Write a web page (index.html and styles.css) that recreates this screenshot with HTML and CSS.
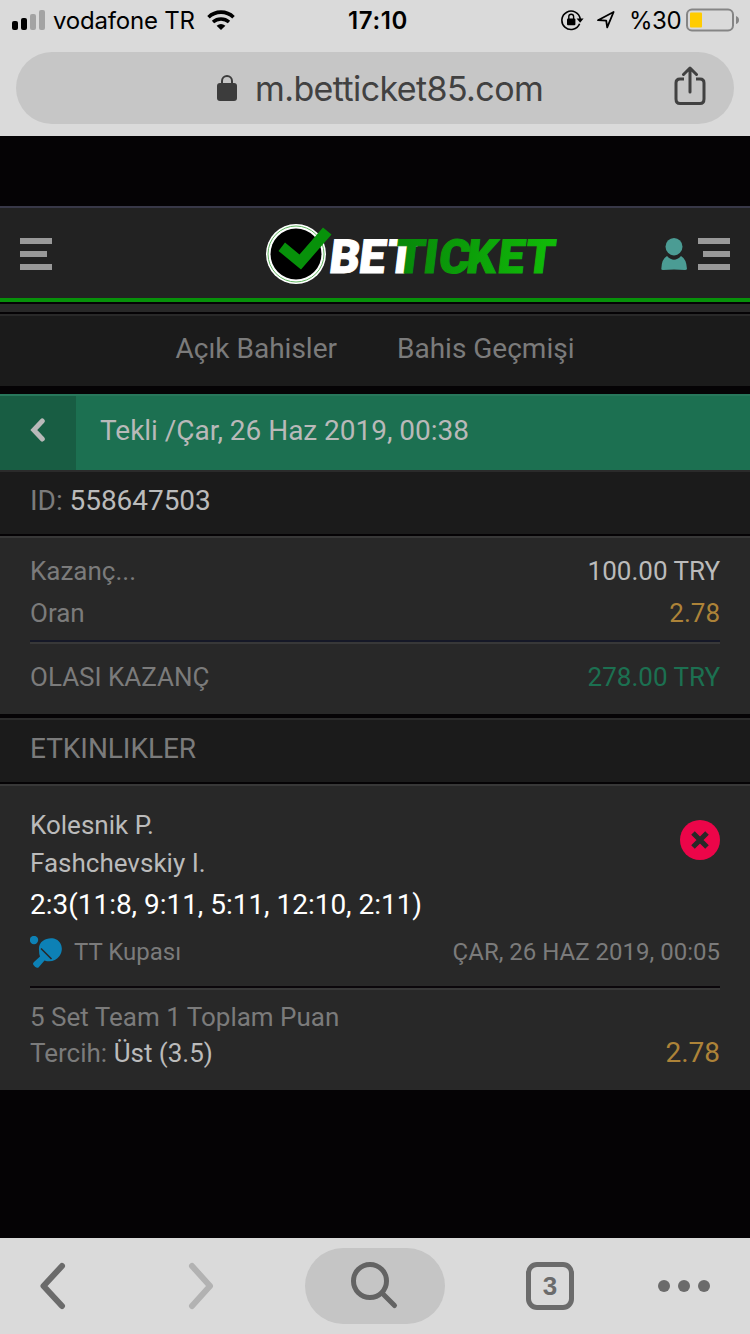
FILE: index.html
```html
<!DOCTYPE html>
<html lang="tr">
<head>
    <meta charset="UTF-8">
    <meta name="viewport" content="width=device-width, initial-scale=1.0">
    <title>Betticket - Bahis Geçmişi</title>
    <link rel="stylesheet" href="styles.css">
</head>
<body>

    <!-- Browser top -->
    <div class="browser-top">
        <div class="status-bar">
            <div class="status-left">
                <svg class="signal" width="34" height="20" viewBox="0 0 34 20">
                    <rect x="0" y="11" width="6" height="9" rx="2"/>
                    <rect x="9" y="8" width="6" height="12" rx="2"/>
                    <rect x="18" y="4" width="6" height="16" rx="2" fill="#a3a3a3"/>
                    <rect x="27" y="0" width="6" height="20" rx="2" fill="#a3a3a3"/>
                </svg>
                <span class="carrier">vodafone TR</span>
                <svg class="wifi" width="28" height="20" viewBox="0 0 28 20">
                    <path d="M1.5 7.2A18 18 0 0 1 26.5 7.2" fill="none" stroke="#000" stroke-width="3.6"/>
                    <path d="M6 12A12 12 0 0 1 22 12" fill="none" stroke="#000" stroke-width="3.4"/>
                    <path d="M14 20L9.6 15.8Q14 12.2 18.4 15.8Z"/>
                </svg>
            </div>
            <span class="clock">17:10</span>
            <div class="status-right">
                <svg class="rotation" width="23" height="22" viewBox="0 0 23 22">
                    <path d="M18.6 14.8A9.2 9.2 0 1 1 19.2 10" fill="none" stroke="#000" stroke-width="1.6"/>
                    <path d="M15.6 9.6H22.6L19.1 13.8Z"/>
                    <rect x="6" y="9.5" width="8.4" height="6.8" rx="1"/>
                    <path d="M7.8 10V7.6A2.4 2.4 0 0 1 12.6 7.6V10" fill="none" stroke="#000" stroke-width="1.4"/>
                </svg>
                <svg class="location" width="20" height="20" viewBox="0 0 20 20">
                    <path d="M2 10.2L17.6 2L11.2 17.4L10.2 10.6Z" fill="none" stroke="#000" stroke-width="1.8" stroke-linejoin="round"/>
                </svg>
                <span class="percent">%30</span>
                <svg class="battery" width="54" height="24" viewBox="0 0 54 24">
                    <rect x="1" y="1.500" width="46" height="21" rx="5" fill="none" stroke="#858585" stroke-width="2"/>
                    <rect x="4" y="4.500" width="12" height="15" rx="1" fill="#ffcc00"/>
                    <path d="M50 8Q53 9 53 12Q53 15 50 16Z" fill="#858585"/>
                </svg>
            </div>
        </div>
        <div class="address-bar">
            <svg class="lock" width="20" height="26" viewBox="0 0 20 26">
                <rect x="0" y="8" width="20" height="18" rx="3" fill="#3c3c3c"/>
                <path d="M5 9V6A5 5 0 0 1 15 6V9" fill="none" stroke="#3c3c3c" stroke-width="2"/>
            </svg>
            <span class="url">m.betticket85.com</span>
            <svg class="share" width="32" height="40" viewBox="0 0 32 40">
                <path d="M10 13H6Q2 13 2 17V33Q2 37.5 6 37.5H26Q30 37.5 30 33V17Q30 13 26 13H22" fill="none" stroke="#414141" stroke-width="3"/>
                <path d="M16 26V3M9.5 8.5L16 2L22.5 8.5" fill="none" stroke="#414141" stroke-width="3" stroke-linecap="round" stroke-linejoin="round"/>
            </svg>
        </div>
    </div>

    <!-- Site -->
    <div class="site">
        <header class="header">
            <div class="menu-icon"><i></i><i></i><i></i></div>
            <svg class="logo" width="294" height="64" viewBox="0 0 294 64">
                <defs>
                    <linearGradient id="green" gradientUnits="userSpaceOnUse" x1="128" x2="285">
                        <stop offset="0" stop-color="#07870a"/>
                        <stop offset="1" stop-color="#11bb08"/>
                    </linearGradient>
                </defs>
                <circle cx="30" cy="32" r="30" fill="#fff"/>
                <circle cx="30" cy="32" r="28" fill="none" stroke="#63b763" stroke-width="1"/>
                <circle cx="30" cy="32" r="25.5" fill="#000"/>
                <path d="M12.500 29L19 20.500L33.500 32.500L57 5.500L65.500 12.500L35 47.500Z" fill="#07910a"/>
                <g transform="translate(0 50.500) skewX(-7)">
                    <text class="logo-text"><tspan x="62 91.500 119" fill="#fff" stroke="#fff">BET</tspan><tspan x="127.500 156 171.500 199 230.500 257.500" fill="url(#green)" stroke="url(#green)">TICKET</tspan></text>
                </g>
            </svg>
            <div class="account">
                <svg class="user" width="26" height="32" viewBox="0 0 26 32">
                    <ellipse cx="13" cy="8.7" rx="8.5" ry="8.7"/>
                    <path d="M6 18Q13 25.5 20 18Q25.5 21 26 31Q25.5 32 24 32Q13 31 2 32Q0.300 32 0.300 31Q0.500 21 6 18Z"/>
                </svg>
                <div class="menu-icon right"><i></i><i></i><i></i></div>
            </div>
        </header>
        <div class="strip"></div>

        <nav class="tabs">
            <a>Açık Bahisler</a>
            <a>Bahis Geçmişi</a>
        </nav>

        <div class="title-bar">
            <div class="back">
                <svg width="16" height="24" viewBox="0 0 16 24">
                    <path d="M12.300 3L3.800 12L12.300 21" fill="none" stroke="#b9b9b9" stroke-width="5" stroke-linecap="round"/>
                </svg>
            </div>
            <div class="title">Tekli /Çar, 26 Haz 2019, 00:38</div>
        </div>

        <div class="row-head"><span>ID:</span> <b>558647503</b></div>

        <div class="summary">
            <div class="line"><span>Kazanç...</span><span class="light">100.00 TRY</span></div>
            <div class="line"><span>Oran</span><span class="gold">2.78</span></div>
            <div class="line total"><span class="caps">OLASI KAZANÇ</span><span class="green">278.00 TRY</span></div>
        </div>

        <div class="row-head events-head"><span>ETKINLIKLER</span></div>

        <div class="event">
            <div class="teams">
                <div>
                    <p>Kolesnik P.</p>
                    <p>Fashchevskiy I.</p>
                </div>
                <svg class="lost" width="40" height="40" viewBox="0 0 40 40">
                    <circle cx="20" cy="20" r="20" fill="#ec0549"/>
                    <path d="M13 13L27 27M27 13L13 27" stroke="#282828" stroke-width="5"/>
                </svg>
            </div>
            <p class="score">2:3(11:8, 9:11, 5:11, 12:10, 2:11)</p>
            <div class="league">
                <svg width="32" height="32" viewBox="0 0 32 32">
                    <circle cx="4" cy="4" r="4.200" fill="#0d81b5"/>
                    <path d="M9 14C8 5 17 1 24 2.500C32 4.500 34 14 29.500 20C26 25 20 26.500 14.500 24.500L8.500 31.500Q7 32.500 5 30.800L3.500 29Q2.300 27.500 4 26L10 20.500Q9 18 9 14Z" fill="#0d81b5"/>
                    <path d="M11 12.500L21.500 23" stroke="#282828" stroke-width="1.600"/>
                </svg>
                <span class="cup">TT Kupası</span>
                <span class="date">ÇAR, 26 HAZ 2019, 00:05</span>
            </div>
            <div class="pick">
                <div>
                    <p>5 Set Team 1 Toplam Puan</p>
                    <p><span class="choice">Tercih:</span> <span class="light">Üst (3.5)</span></p>
                </div>
                <span class="odds">2.78</span>
            </div>
        </div>
    </div>

    <!-- Browser toolbar -->
    <div class="toolbar">
        <svg class="prev" width="26" height="48" viewBox="0 0 26 48">
            <path d="M22 4L3.500 24L22 44" fill="none" stroke="#6b6b6b" stroke-width="6" stroke-linecap="round" stroke-linejoin="round"/>
        </svg>
        <svg class="next" width="26" height="48" viewBox="0 0 26 48">
            <path d="M4 4L22 24L4 44" fill="none" stroke="#b2b2b2" stroke-width="6" stroke-linecap="round" stroke-linejoin="round"/>
        </svg>
        <div class="search">
            <svg width="48" height="48" viewBox="0 0 48 48">
                <circle cx="19" cy="19" r="16.500" fill="none" stroke="#636363" stroke-width="5"/>
                <path d="M31 31L43.500 43.500" stroke="#636363" stroke-width="5" stroke-linecap="round"/>
            </svg>
        </div>
        <div class="tab-count">3</div>
        <div class="dots"><i></i><i></i><i></i></div>
    </div>

</body>
</html>
```
FILE: styles.css
```css
* {
    box-sizing: border-box;
}

body {
    margin: 0;
    width: 750px;
    height: 1334px;
    display: flex;
    flex-direction: column;
    overflow: hidden;
    background: #050305;
    font-family: Roboto, 'Liberation Sans', sans-serif;
    color: #7b7b7b;
}

p {
    margin: 0;
}

svg {
    display: block;
    flex: none;
}

/* Browser top */
.browser-top {
    height: 136px;
    background: #dadada;
    font-family: Inter, 'Liberation Sans', sans-serif;
    color: #000;
}

.status-bar {
    display: grid;
    grid-template-columns: 1fr auto 1fr;
    align-items: center;
    height: 40px;
    padding: 0 12px;
    font-size: 24px;
    white-space: nowrap;
}

.status-left,
.status-right {
    display: flex;
    align-items: center;
}

.status-right {
    justify-content: flex-end;
}

.carrier {
    margin-left: 7px;
    padding-top: 1px;
    width: 141px;
    letter-spacing: -0.2px;
}

.wifi {
    margin-left: 13px;
}

.clock {
    padding: 1px 0 0 6px;
    font-weight: 600;
    font-size: 24px;
    letter-spacing: 0.6px;
}

.location {
    margin: 0 13px 0 12px;
}

.percent {
    margin-right: 7px;
    padding-top: 1px;
    width: 50px;
    letter-spacing: -0.5px;
}

.battery {
    margin-right: -2px;
}

.address-bar {
    display: flex;
    align-items: center;
    height: 72px;
    margin: 12px 16px 0;
    padding: 0 28px 0 201px;
    border-radius: 36px;
    background: #c6c6c6;
}

.url {
    margin-left: 18px;
    font-size: 34px;
    letter-spacing: -0.6px;
    color: #414141;
}

.share {
    margin: -5px 0 0 auto;
}

/* Header */
.site {
    flex: 1;
    padding-top: 70px;
}

.header {
    display: flex;
    align-items: center;
    height: 96px;
    padding: 0 20px;
    background: #222;
    border-top: 2px solid #383848;
    border-bottom: 4px solid #07910a;
}

.menu-icon {
    display: flex;
    flex-direction: column;
    gap: 7px;
    width: 32px;
    padding-top: 1px;
}

.menu-icon i {
    height: 6px;
    background: #999;
}

.menu-icon i:nth-child(2) {
    width: 27px;
}

.menu-icon.right {
    align-items: flex-end;
}

.menu-icon.right i {
    width: 32px;
}

.menu-icon.right i:nth-child(2) {
    width: 27px;
}

.logo {
    margin: 2px 0 0 214px;
}

.logo-text {
    font-family: Roboto, sans-serif;
    font-size: 47px;
    font-weight: 900;
    stroke-width: 1px;
}

.account {
    display: flex;
    gap: 11px;
    margin: 1px 0 0 auto;
}

.account .menu-icon {
    padding-top: 0;
}

.user {
    fill: #4b9c94;
}

.strip {
    height: 12px;
    border-top: 2px solid #050305;
    border-bottom: 2px solid #050305;
    background: #282828;
}

.tabs {
    display: flex;
    justify-content: center;
    align-items: center;
    gap: 60px;
    height: 72px;
    padding-bottom: 5px;
    background: #1b1b1b;
    border-top: 2px solid #292929;
    font-size: 28px;
}

/* Coupon */
.title-bar {
    display: flex;
    height: 76px;
    margin-top: 8px;
    background: #1c7051;
    border-top: 2px solid #28775b;
    font-size: 28px;
    color: #b9b9b9;
}

.back {
    display: flex;
    align-items: center;
    width: 76px;
    padding: 0 0 6px 30px;
    background: #185d43;
}

.title {
    padding-left: 24px;
    line-height: 69px;
    letter-spacing: -0.03px;
}

.row-head {
    height: 64px;
    border-top: 2px solid #2b2b2b;
    background: #1b1b1b;
    padding-left: 30px;
    font-size: 28px;
    line-height: 57px;
    letter-spacing: -0.05px;
}

.row-head b {
    font-weight: 400;
    color: #bbb;
}

.summary {
    height: 178px;
    margin-top: 2px;
    padding: 12px 30px 0;
    border-top: 2px solid #383838;
    background: #282828;
}

.line {
    display: flex;
    justify-content: space-between;
    font-size: 26px;
    line-height: 42px;
}

.total {
    margin-top: 6px;
    padding-top: 12px;
    border-top: 2px solid #151827;
    box-shadow: inset 0 2px #383838;
    line-height: 46px;
}

.light {
    color: #bbb;
}

.gold {
    color: #ad8338;
}

.green {
    color: #1c7051;
}

.events-head {
    height: 64px;
    margin-top: 4px;
}

/* Event */
.event {
    height: 306px;
    margin-top: 2px;
    padding: 20px 30px 0;
    border-top: 2px solid #383838;
    background: #282828;
}

.teams {
    display: flex;
    justify-content: space-between;
    font-size: 26px;
    line-height: 38px;
    color: #bbb;
}

.lost {
    margin-top: 14px;
}

.score {
    padding-top: 1px;
    font-size: 28px;
    line-height: 43px;
    letter-spacing: -0.03px;
    color: #fff;
}

.league {
    display: flex;
    align-items: center;
    height: 32px;
    margin-top: 10px;
    font-size: 24px;
}

.cup {
    margin-left: 12px;
}

.date {
    margin-left: auto;
}

.pick {
    display: flex;
    justify-content: space-between;
    align-items: flex-end;
    margin-top: 18px;
    padding-top: 11px;
    border-top: 2px solid #0b070b;
    box-shadow: inset 0 2px #383838;
    font-size: 26px;
    line-height: 36px;
}

.odds {
    font-size: 28px;
    color: #ad8338;
}

/* Toolbar */
.toolbar {
    display: flex;
    align-items: center;
    height: 96px;
    padding: 0 40px;
    background: #dadada;
}

.next {
    margin-left: 122px;
}

.search {
    display: flex;
    align-items: center;
    justify-content: center;
    width: 140px;
    height: 76px;
    margin-left: 91px;
    border-radius: 38px;
    background: #c5c5c5;
}

.tab-count {
    width: 48px;
    height: 48px;
    margin-left: 81px;
    border: 5px solid #6b6b6b;
    border-radius: 11px;
    font: bold 26px/38px 'Liberation Sans', sans-serif;
    color: #6b6b6b;
    text-align: center;
}

.dots {
    display: flex;
    gap: 8px;
    margin-left: 84px;
}

.dots i {
    width: 12px;
    height: 12px;
    border-radius: 50%;
    background: #6b6b6b;
}
```
